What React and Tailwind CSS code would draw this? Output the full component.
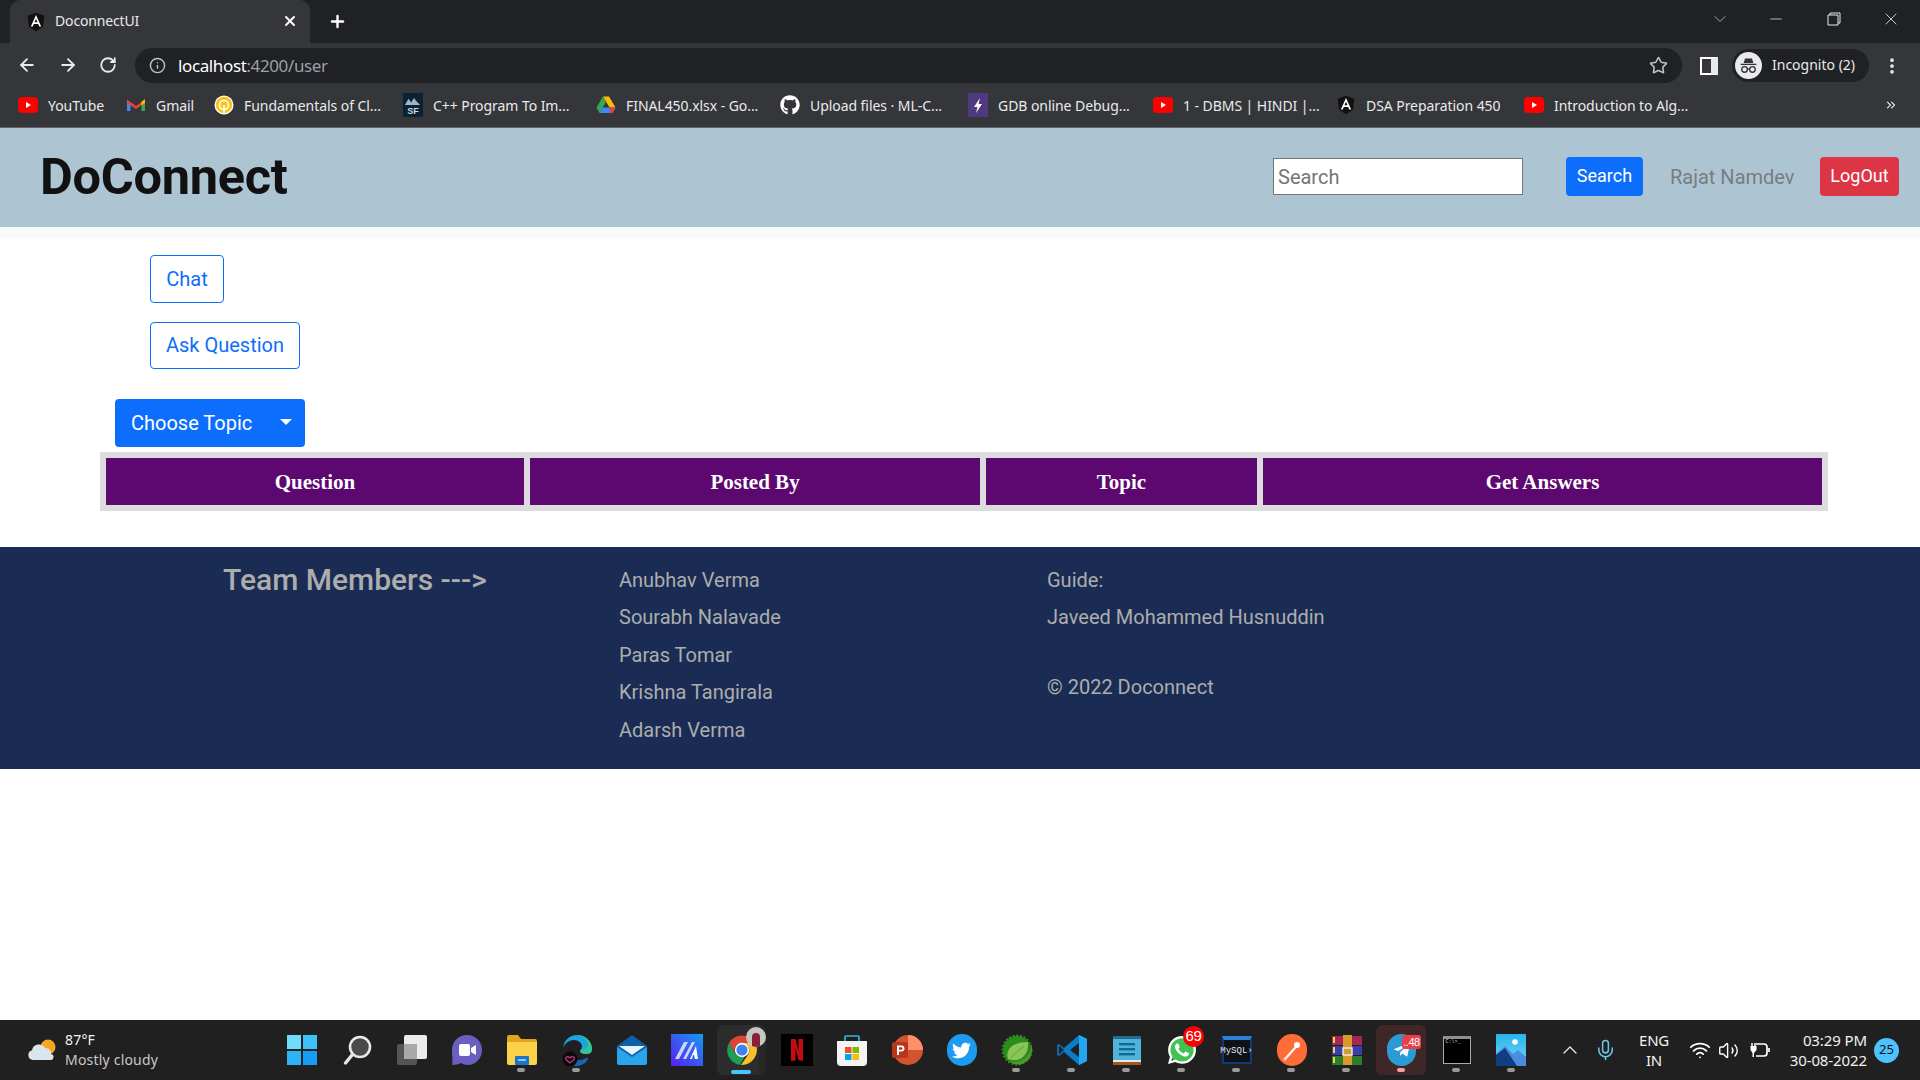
import React from 'react';
import { ArrowLeft, ArrowRight, RotateCw, Info, Star, X, Plus, ChevronDown, ChevronUp, Minus, EllipsisVertical, Mic, Wifi, Volume2, ChevronsRight } from 'lucide-react';
import { FaGithub, FaTwitter, FaWhatsapp, FaTelegramPlane } from 'react-icons/fa';

const Angular = () => (
  <svg viewBox="0 0 24 24" className="w-[20px] h-[20px]">
    <path d="M12 1 2 4.6l1.6 13.2L12 23l8.4-5.2L22 4.6z" fill="#111" />
    <path d="M12 3.5 5.8 17.4h2.3l1.25-3.1h5.3l1.25 3.1h2.3zM13.8 12.4h-3.6L12 8.1z" fill="#fff" />
  </svg>
);
const YouTube = () => (
  <svg viewBox="0 0 20 20" className="w-[20px] h-[20px]">
    <rect x="0" y="2" width="20" height="16" rx="4" fill="#f00" />
    <path d="M8 7v6l5-3z" fill="#fff" />
  </svg>
);
const Gmail = () => (
  <svg viewBox="0 0 20 20" className="w-[20px] h-[20px]">
    <path d="M1 5v11h3.5V8.5z" fill="#4285f4" />
    <path d="M19 5v11h-3.5V8.5z" fill="#34a853" />
    <path d="M1 4.5 10 11l9-6.5V8l-9 6-9-6z" fill="#ea4335" />
    <path d="M15.5 6.8 19 4.3V8l-3.5 2.4z" fill="#fbbc04" />
  </svg>
);
const Coin = () => (
  <svg viewBox="0 0 20 24" className="w-[20px] h-[24px]">
    <circle cx="10" cy="12" r="9.5" fill="#fff" />
    <circle cx="10" cy="12" r="8.2" fill="#f5c518" />
    <circle cx="10" cy="12" r="4.5" fill="none" stroke="#fff" strokeWidth="1.6" />
    <rect x="9.2" y="12" width="1.6" height="8" fill="#fff" />
  </svg>
);
const SfIcon = () => (
  <div className="w-[20px] h-[24px] bg-[#0b2235] flex flex-col items-center justify-end pb-[1px]">
    <svg viewBox="0 0 20 10" className="w-[18px] h-[9px]"><path d="M1 9 5 2l3 4 3-5 3 4 4 4z" fill="#9fb6c6" /></svg>
    <span className="font-['Liberation_Sans',sans-serif] font-bold text-[9px] leading-[10px] text-[#cfd8dc]">SF</span>
  </div>
);
const Drive = () => (
  <svg viewBox="0 0 20 20" className="w-[20px] h-[20px]">
    <path d="M7 1.5h6l6.5 11h-6z" fill="#fbbc04" />
    <path d="M7 1.5 .5 12.5l3 5.5L10 7z" fill="#34a853" />
    <path d="M3.5 18h13l3-5.5h-13z" fill="#4285f4" />
    <path d="M13.5 18h3l3-5.5h-5.5z" fill="#ea4335" />
  </svg>
);
const Gdb = () => (
  <svg viewBox="0 0 20 24" className="w-[20px] h-[24px]">
    <rect width="20" height="24" fill="#4f3a80" />
    <path d="M12 5 6 14h3.5L8 20l6-9h-3.5z" fill="#fff" />
  </svg>
);

const bookmarks = [
  { w: 'w-[108px]', icon: <YouTube />, label: 'YouTube' },
  { w: 'w-[88px]', icon: <Gmail />, label: 'Gmail' },
  { w: 'w-[189px]', icon: <Coin />, label: 'Fundamentals of Cl...' },
  { w: 'w-[193px]', icon: <SfIcon />, label: 'C++ Program To Im...' },
  { w: 'w-[184px]', icon: <Drive />, label: 'FINAL450.xlsx - Go...' },
  { w: 'w-[188px]', icon: <FaGithub className="w-[20px] h-[20px] text-white" />, label: 'Upload files · ML-C...' },
  { w: 'w-[185px]', icon: <Gdb />, label: 'GDB online Debug...' },
  { w: 'w-[183px]', icon: <YouTube />, label: '1 - DBMS | HINDI |...' },
  { w: 'w-[188px]', icon: <Angular />, label: 'DSA Preparation 450' },
  { w: 'w-[175px]', icon: <YouTube />, label: 'Introduction to Alg...' },
];

const Ico = ({ children, className = 'w-[32px] h-[32px]', box = '0 0 32 32' }) => (
  <svg viewBox={box} className={className}>{children}</svg>
);

const taskIcons = [
  { key: 'start', node: <Ico><rect x="1" y="1" width="14" height="14" fill="#6fdcfb" /><rect x="17" y="1" width="14" height="14" fill="#3dc2f7" /><rect x="1" y="17" width="14" height="14" fill="#2bb5f7" /><rect x="17" y="17" width="14" height="14" fill="#169ef5" /></Ico> },
  { key: 'search', node: <Ico><circle cx="19" cy="13" r="10" fill="#4a4a4a" stroke="#e8e8e8" strokeWidth="2.6" /><path d="M11.5 20.5 4.5 29" stroke="#e8e8e8" strokeWidth="3.4" strokeLinecap="round" /></Ico> },
  { key: 'task', node: <Ico><rect x="1" y="10" width="20" height="21" rx="2" fill="#555" /><rect x="8" y="1" width="23" height="24" rx="2" fill="#ececec" /><rect x="8" y="10" width="13" height="15" fill="#a9a9a9" /></Ico> },
  { key: 'chat', node: <Ico><path d="M16 1C7 1 1 8 1 16c0 5 1 11 0 15 4 0 7-1 9-2 2 1 4 2 7 2 8 0 14-7 14-15S25 1 16 1z" fill="#6a5fc1" /><rect x="8" y="10" width="11" height="12" rx="2" fill="#fff" /><path d="m20 14 5-3v10l-5-3z" fill="#fff" /></Ico> },
  { key: 'explorer', dot: true, node: <Ico><path d="M1 3a2 2 0 0 1 2-2h9l3 4h14a2 2 0 0 1 2 2v5H1z" fill="#e2a41a" /><path d="M1 8h30v21a2 2 0 0 1-2 2H3a2 2 0 0 1-2-2z" fill="#fbd249" /><rect x="9" y="22" width="14" height="9" rx="1" fill="#1a74c8" /><rect x="12" y="25" width="8" height="2" fill="#8cc8f5" /></Ico> },
  { key: 'edge', dot: true, node: <Ico><path d="M2 14C3 6 9 1 16 1c8 0 15 6 15 14 0 3-2 5-6 5-3 0-6-1-6-3 0-1 2-2 2-5 0-3-4-6-8-6C8 6 4 9 2 14z" fill="#1ea3e2" /><path d="M31 15c0-8-7-14-15-14 6 1 11 5 11 10 0 2-2 3-2 3l-6 3c0 2 3 3 6 3 4 0 6-2 6-5z" fill="#35c48d" /><path d="M10 31c5 2 11 1 15-3 3-3 2-5 0-4-5 3-10 3-13 0l-3 3z" fill="#1566b5" /><circle cx="9" cy="25" r="7.5" fill="#0b0b0f" /><path d="M9 29 5 25.5c-1.500-2 1.500-4 4-1.600 2.500-2.400 5.500-.4 4 1.600z" fill="none" stroke="#b83a72" strokeWidth="1.300" /></Ico> },
  { key: 'mail', node: <Ico><path d="M1 12 16 1l15 11v2L16 24 1 14z" fill="#0f5ea8" /><path d="M3 12h26l-13 9z" fill="#e5f3fb" /><path d="M1 13v16a2 2 0 0 0 2 2h26a2 2 0 0 0 2-2V13L16 23z" fill="#2aa4ea" /></Ico> },
  { key: 'mica', node: <Ico><defs><linearGradient id="mica" x1="0" y1="1" x2="1" y2="0"><stop offset="0" stopColor="#5a1cf5" /><stop offset="1" stopColor="#139cf0" /></linearGradient></defs><rect width="32" height="32" fill="url(#mica)" /><path d="M4 25 13 8h4L8 25zM12 25 21 8h3l-9 17z" fill="#cfd2fa" /><path d="M19 25l6-13 2 13h-3l-1-4h-1l-1 4z" fill="#fff" /></Ico> },
  { key: 'chrome', active: 'chrome', node: (
    <div className="relative w-[32px] h-[32px]">
      <Ico>
        <path d="M29.100 9A15 15 0 0 0 3 9l6.300 10.800A7.500 7.500 0 0 1 16 9z" fill="#de4437" />
        <path d="M3 9a15 15 0 0 0 11 22l6-11-1 1A7.500 7.500 0 0 1 9.300 19.800z" fill="#1f9d55" />
        <path d="M29.100 9H16a7.500 7.500 0 0 1 6.500 11L15 31A15 15 0 0 0 29.100 9z" fill="#fbc02d" />
        <circle cx="16" cy="16" r="7.200" fill="#fff" /><circle cx="16" cy="16" r="5.600" fill="#3f82ee" />
      </Ico>
      <div className="absolute -top-[7px] -right-[8px] w-[20px] h-[20px] rounded-full bg-[#c7c7c2] overflow-hidden flex justify-center items-end">
        <div className="w-[8px] h-[14px] bg-[#8c1f3c] rounded-t-full" />
      </div>
    </div>
  ) },
  { key: 'netflix', node: <Ico><rect width="32" height="32" fill="#000" /><path d="M10 5h4.500l3 12V5H22v22l-4.500-1-3-12v12.500L10 27z" fill="#c30b12" /></Ico> },
  { key: 'store', node: <Ico><path d="M9 8V3a1 1 0 0 1 1-1h12a1 1 0 0 1 1 1v5" fill="none" stroke="#2ab7ea" strokeWidth="1.700" /><path d="M1 7h30v21a4 4 0 0 1-4 4H5a4 4 0 0 1-4-4z" fill="#f4f4f4" /><rect x="9" y="13" width="6.500" height="6" fill="#f25022" /><rect x="16.500" y="13" width="6.500" height="6" fill="#7fba00" /><rect x="9" y="20" width="6.500" height="6" fill="#00a4ef" /><rect x="16.500" y="20" width="6.500" height="6" fill="#ffb900" /></Ico> },
  { key: 'ppt', node: <Ico><circle cx="17" cy="16" r="15" fill="#d35230" /><path d="M17 1a15 15 0 0 1 15 15H17z" fill="#ff8f6b" /><rect x="1" y="8" width="16" height="16" rx="2" fill="#b7361b" /><path d="M6 11.500h4.500a3 3 0 0 1 0 6H8v3.500H6zM8 13.200v2.600h2.200a1.300 1.300 0 0 0 0-2.600z" fill="#fff" /></Ico> },
  { key: 'twitter', node: <div className="w-[30px] h-[32px] rounded-full bg-[#1d9bf0] flex items-center justify-center"><FaTwitter className="w-[19px] h-[19px] text-white" /></div> },
  { key: 'spring', dot: true, node: <Ico><circle cx="16" cy="16" r="14" fill="#2e8b1f" strokeDasharray="2 1.600" stroke="#2e8b1f" strokeWidth="3" /><path d="M31 17a14 14 0 0 1-23 10C20 30 30 24 31 8z" fill="#4c9a2a" /><path d="M7 25c-3-8 3-17 20-17 1 9-4 18-13 18-2 0-5 0-7-1z" fill="#8bc557" /><path d="M10 24C14 19 18 16 23 12" stroke="#5da033" strokeWidth="1" fill="none" /></Ico> },
  { key: 'vscode', dot: true, node: <Ico><path d="M23 1 31 5v22l-8 4-15-13-5 4-2-1.500V11L3 10l5 4z" fill="#0a7dc9" /><path d="M23 1 31 5v22l-8 4z" fill="#25a6ee" /><path d="M23 9v14l-9-7z" fill="#212121" /><path d="M3 10 1 11v10l2 1 5-6z" fill="#0e64a8" /><path d="M8 16 3 12v8z" fill="#212121" /></Ico> },
  { key: 'notes', dot: true, node: <Ico><rect x="2" y="3" width="28" height="26" fill="#4fb3da" /><rect x="2" y="27" width="28" height="4" fill="#9c5a1f" /><rect x="2" y="26" width="28" height="2" fill="#e8e8e8" /><rect x="2" y="2" width="28" height="3" fill="#1f6f94" /><rect x="8" y="9" width="16" height="2.400" fill="#126a91" /><rect x="8" y="14" width="16" height="2.400" fill="#126a91" /><rect x="8" y="19" width="16" height="2.400" fill="#126a91" /></Ico> },
  { key: 'whatsapp', dot: true, badge: '69', node: (
    <div className="relative w-[32px] h-[32px]">
      <div className="absolute inset-[3px] rounded-full bg-[#40c351]" />
      <FaWhatsapp className="absolute inset-0 w-[32px] h-[32px] text-white" />
    </div>
  ) },
  { key: 'mysql', dot: true, node: <div className="w-[30px] h-[28px] bg-[#10121a] border-2 border-[#123a78] border-t-[4px] border-t-[#2e7fd6] flex items-center justify-center"><span className="font-['Liberation_Mono',monospace] text-[9px] leading-none text-[#e5e5e5]">MySQL›</span></div> },
  { key: 'postman', dot: true, node: <div className="w-[30px] h-[32px] rounded-full bg-[#ff6c37] flex items-center justify-center"><svg viewBox="0 0 30 32" className="w-[30px] h-[32px]"><path d="M9 24l8-9M17 15l4-4" stroke="#fff" strokeWidth="2" strokeLinecap="round" /><circle cx="20" cy="11" r="3" fill="#fff" /><path d="M9 24l-2 2" stroke="#ffd6c7" strokeWidth="3" /></svg></div> },
  { key: 'winrar', dot: true, node: <Ico><rect x="1" y="2" width="30" height="9" fill="#a6274f" /><rect x="1" y="12" width="30" height="9" fill="#3a3ea8" /><rect x="1" y="22" width="30" height="9" fill="#2d7d2d" /><rect x="12" y="1" width="9" height="30" fill="#d69a2d" /><rect x="12" y="14" width="9" height="7" fill="none" stroke="#eee" strokeWidth="1.400" /><rect x="2" y="3" width="2" height="6" fill="#f3d14b" /><rect x="2" y="13" width="2" height="6" fill="#f3d14b" /><rect x="2" y="23" width="2" height="6" fill="#f3d14b" /></Ico> },
  { key: 'telegram', active: 'telegram', badge2: '..48', node: <div className="w-[29px] h-[32px] rounded-full bg-[#2b9bd6] flex items-center justify-center"><FaTelegramPlane className="w-[18px] h-[18px] text-white" /></div> },
  { key: 'terminal', dot: true, node: <div className="w-[28px] h-[28px] bg-black border border-[#aaa] border-t-[3px] border-t-[#8f8f8f] pl-[2px]"><span className="block font-['Liberation_Mono',monospace] text-[5px] leading-[7px] text-[#ddd]">C:\&gt;_</span></div> },
  { key: 'photos', dot: true, node: <Ico><defs><linearGradient id="sky" x1="0" y1="0" x2="0" y2="1"><stop offset="0" stopColor="#28b5ec" /><stop offset="1" stopColor="#7ad4f6" /></linearGradient></defs><rect width="30" height="32" fill="url(#sky)" /><circle cx="19" cy="8" r="2.800" fill="#fff" /><path d="M0 32V20L9 12l8 8 5-4 8 7v9z" fill="#4c8ce0" /><path d="M0 32V21l9-7 12 18z" fill="#123d80" /></Ico> },
];

function ChromeBar() {
  return (
    <div className="shrink-0 font-['Noto_Sans',sans-serif] text-white">
      <div className="h-[43px] bg-[#202124] flex items-end relative">
        <div className="ml-[10px] w-[300px] h-[43px] bg-[#35363a] rounded-t-[10px] flex items-center pl-[16px] pr-[12px]">
          <Angular />
          <span className="ml-[9px] -translate-y-[1px] text-[14px] tracking-[-0.15px] text-[#e8eaed] flex-1">DoconnectUI</span>
          <X className="w-[16px] h-[16px] -translate-y-[1px] text-white" strokeWidth={3} />
        </div>
        <Plus className="w-[19px] h-[19px] ml-[18px] mb-[12px] text-white" strokeWidth={3} />
        <div className="flex-1" />
        <div className="flex items-center h-[43px] pb-[6px] text-[#e8eaed]">
          <ChevronDown className="w-[20px] h-[20px] mr-[37px] text-[#bdc1c6]" strokeWidth={1} />
          <Minus className="w-[18px] h-[18px] mr-[42px]" strokeWidth={1} />
          <svg viewBox="0 0 14 14" className="w-[14px] h-[14px] mr-[40px]"><path d="M3 3V1h10v10h-2M1 3h10v10H1z" fill="none" stroke="#e8eaed" strokeWidth="1" /></svg>
          <X className="w-[20px] h-[20px] mr-[19px]" strokeWidth={1} />
        </div>
      </div>
      <div className="h-[40px] bg-[#35363a] flex items-end">
        <div className="w-[135px] h-[35px] flex items-center pl-[17px] pb-[2px] text-[#e8eaed] gap-[21px]">
          <ArrowLeft className="w-[20px] h-[20px]" strokeWidth={2.2} />
          <ArrowRight className="w-[20px] h-[20px]" strokeWidth={2.2} />
          <RotateCw className="w-[18px] h-[18px]" strokeWidth={2.4} />
        </div>
        <div className="w-[1547px] h-[35px] bg-[#202124] rounded-full flex items-center pl-[14px] pr-[14px]">
          <Info className="w-[17px] h-[17px] text-[#bdc1c6]" strokeWidth={2} />
          <span className="ml-[12px] text-[17px] tracking-[-0.38px] text-white flex-1">localhost<span className="text-[#9aa0a6]">:4200/user</span></span>
          <Star className="w-[19px] h-[19px] text-[#bdc1c6]" strokeWidth={2} />
        </div>
        <div className="flex-1 h-[35px] flex items-center">
          <div className="ml-[18px] w-[18px] h-[18px] border-[2.5px] border-white border-r-[7px] border-r-[#e8eaed] bg-[#35363a]" />
          <div className="ml-[14px] w-[137px] h-[33px] rounded-full bg-[#202124] flex items-center pl-[3px]">
            <div className="w-[27px] h-[27px] rounded-full bg-[#e8eaed] flex items-center justify-center">
              <svg viewBox="0 0 24 24" className="w-[21px] h-[21px]"><path d="M8 4h8l1.500 5h-11zM3 10h18v1.500H3z" fill="#333" /><circle cx="7.500" cy="16.500" r="3.200" fill="none" stroke="#333" strokeWidth="1.500" /><circle cx="16.500" cy="16.500" r="3.200" fill="none" stroke="#333" strokeWidth="1.500" /><path d="M10.500 16h3" stroke="#333" strokeWidth="1.500" /></svg>
            </div>
            <span className="ml-[10px] -translate-y-[1px] text-[14px] tracking-[0px] text-[#e8eaed] whitespace-nowrap">Incognito (2)</span>
          </div>
          <EllipsisVertical className="w-[20px] h-[20px] ml-[13px] text-[#e8eaed]" strokeWidth={2.5} />
        </div>
      </div>
      <div className="h-[45px] bg-[#35363a] flex items-center pl-[18px] border-b border-[#5f6368]">
        {bookmarks.map((b, i) => (
          <div key={i} className={`${b.w} flex items-center gap-[10px] shrink-0`}>
            <span className="w-[20px] flex justify-center shrink-0">{b.icon}</span>
            <span className="text-[14px] tracking-[-0.06px] text-[#e8eaed] whitespace-nowrap">{b.label}</span>
          </div>
        ))}
        <div className="flex-1" />
        <ChevronsRight className="w-[14px] h-[14px] mr-[22px] text-[#e8eaed]" strokeWidth={2} />
      </div>
    </div>
  );
}

function Page() {
  return (
    <div className="flex-1 bg-white font-['Roboto',sans-serif]">
      <header className="h-[99px] bg-[#adc5d2] flex items-center pl-[40px]">
        <h1 className="text-[50.5px] font-bold tracking-[-0.3px] text-[#111] leading-none flex-1">DoConnect</h1>
        <input readOnly placeholder="Search" className="w-[250px] h-[37px] -translate-y-[1px] mr-[-1px] bg-white border border-[#767676] pl-[4px] text-[20px] text-[#757575] placeholder:text-[#757575] outline-none" />
        <button className="ml-[44px] w-[77px] h-[39px] -translate-y-[1px] rounded-[4px] bg-[#0d6efd] text-white text-[18px] pb-[2px]">Search</button>
        <span className="ml-[27px] w-[150px] -translate-y-[1px] text-[20px] text-[#777d84]">Rajat Namdev</span>
        <button className="w-[79px] h-[39px] -translate-y-[1px] rounded-[4px] bg-[#dc3545] text-white text-[18px] mr-[21px] pb-[2px]">LogOut</button>
      </header>
      <div className="h-[11px] bg-[#f8f9fa]" />
      <div className="pl-[150px] pt-[17px] flex flex-col items-start gap-[19px]">
        <button className="w-[74px] h-[48px] rounded-[4px] border border-[#0d6efd] text-[#0d6efd] text-[20px]">Chat</button>
        <button className="w-[150px] h-[47px] rounded-[4px] border border-[#0d6efd] text-[#0d6efd] text-[20px] pb-[1px]">Ask Question</button>
      </div>
      <button className="ml-[115px] mt-[30px] w-[190px] h-[48px] rounded-[4px] bg-[#0d6efd] text-white text-[20px] flex items-center pl-[16px]">
        Choose Topic
        <span className="ml-[28px] w-0 h-0 border-x-[6px] border-x-transparent border-t-[6px] border-t-white -translate-y-[1px]" />
      </button>
      <div className="ml-[100px] mr-[92px] mt-[5px] bg-[#dcdcdc]">
        <table className="w-full table-fixed border-separate [border-spacing:6px]">
          <thead>
            <tr className="h-[47px] text-white font-['Liberation_Serif',serif]">
              <th className="w-[418px] bg-[#5c0870] text-[21px] font-bold pt-[2px]">Question</th>
              <th className="w-[450px] bg-[#5c0870] text-[21px] font-bold pt-[2px]">Posted By</th>
              <th className="w-[271px] bg-[#5c0870] text-[21px] font-bold pt-[2px]">Topic</th>
              <th className="bg-[#5c0870] text-[21px] font-bold pt-[2px]">Get Answers</th>
            </tr>
          </thead>
        </table>
      </div>
      <footer className="mt-[36px] h-[222px] bg-[#1a2c54] flex text-[#adadad] text-[20px]">
        <div className="ml-[223px] w-[396px] text-[30px] font-medium pt-[15px] leading-[36px]">Team Members ---&gt;</div>
        <div className="w-[428px] pt-[17.5px] flex flex-col gap-[7.5px] leading-[30px]">
          <span>Anubhav Verma</span>
          <span>Sourabh Nalavade</span>
          <span>Paras Tomar</span>
          <span>Krishna Tangirala</span>
          <span>Adarsh Verma</span>
        </div>
        <div className="pt-[17.5px] flex flex-col leading-[30px]">
          <span>Guide:</span>
          <span className="mt-[7.5px]">Javeed Mohammed Husnuddin</span>
          <span className="mt-[40px]">© 2022 Doconnect</span>
        </div>
      </footer>
    </div>
  );
}

function Taskbar() {
  return (
    <div className="shrink-0 h-[60px] bg-[#202020] flex items-center text-white font-['Noto_Sans',sans-serif]">
      <div className="w-[274px] flex items-center pl-[27px]">
        <svg viewBox="0 0 30 26" className="w-[30px] h-[26px]">
          <circle cx="21" cy="10" r="7.500" fill="#f6a623" />
          <path d="M6 23a5 5 0 0 1-1-9.800A7 7 0 0 1 18 11a5.500 5.500 0 0 1 6 6 3 3 0 0 1-1 6z" fill="#dbe5f0" />
        </svg>
        <div className="ml-[8px] flex flex-col leading-[20px] text-[14px] tracking-[0.2px]">
          <span className="text-[#f2f2f2]">87°F</span>
          <span className="text-[#c9c9c9]">Mostly cloudy</span>
        </div>
      </div>
      <div className="flex">
        {taskIcons.map((t) => (
          <div key={t.key} className="relative w-[55px] h-[60px] flex items-center justify-center">
            {t.active === 'chrome' && <div className="absolute left-[3px] top-[5px] w-[49px] h-[50px] rounded-[6px] bg-[#2c2c2c] border-r-[7px] border-r-[#272727]" />}
            {t.active === 'telegram' && <div className="absolute left-[2px] top-[5px] w-[50px] h-[50px] rounded-[6px] bg-[#3f2728]" />}
            <div className="relative">{t.node}</div>
            {t.dot && <div className="absolute bottom-[8px] left-[23px] w-[8px] h-[4px] rounded-full bg-[#9a9a9a]" />}
            {t.active === 'chrome' && <div className="absolute bottom-[6px] left-[17px] w-[20px] h-[4px] rounded-full bg-[#4cc2ff]" />}
            {t.active === 'telegram' && <div className="absolute bottom-[8px] left-[23px] w-[8px] h-[4px] rounded-full bg-[#f4a0a8]" />}
            {t.badge && <div className="absolute top-[6px] right-[5px] w-[21px] h-[21px] rounded-full bg-[#f00] flex items-center justify-center text-[15px] tracking-[-0.3px] font-['Liberation_Sans',sans-serif]">{t.badge}</div>}
            {t.badge2 && <div className="absolute top-[15px] right-[8px] w-[19px] h-[14px] rounded-[3px] bg-[#e8404a] flex items-center justify-center text-[11px] tracking-[-0.5px] font-['Liberation_Sans',sans-serif]">{t.badge2}</div>}
          </div>
        ))}
      </div>
      <div className="flex items-center flex-1">
        <ChevronUp className="w-[24px] h-[24px] ml-[19px] text-[#e8e8e8]" strokeWidth={1.3} />
        <Mic className="w-[23px] h-[26px] ml-[12px] text-[#6cc6e6]" strokeWidth={1.6} />
        <div className="ml-[22px] flex flex-col items-center leading-[20px] text-[15px] tracking-[-0.2px] text-[#f2f2f2]">
          <span>ENG</span><span>IN</span>
        </div>
        <Wifi className="w-[22px] h-[22px] ml-[20px] text-white" strokeWidth={2} />
        <Volume2 className="w-[21px] h-[21px] ml-[7px] text-white" strokeWidth={1.6} />
        <svg viewBox="0 0 22 16" className="w-[22px] h-[16px] ml-[10px]"><path d="M7 2h8a3 3 0 0 1 3 3v6a3 3 0 0 1-3 3H7" fill="none" stroke="#fff" strokeWidth="1.700" /><path d="M20 6v4" stroke="#fff" strokeWidth="1.700" /><path d="M3 1v3M6 1v3" stroke="#fff" strokeWidth="1.500" /><path d="M1.500 4h6v4L5 11v4H3.500v-4L1.500 8z" fill="#fff" /></svg>
        <div className="ml-auto flex flex-col items-end leading-[20px] text-[15px] tracking-[-0.1px] text-[#f2f2f2]">
          <span>03:29 PM</span><span>30-08-2022</span>
        </div>
        <div className="ml-[7px] mr-[21px] w-[25px] h-[25px] rounded-full bg-[#4cc2ff] flex items-center justify-center text-[13px] text-[#111]">25</div>
      </div>
    </div>
  );
}

export default function App() {
  return (
    <div className="w-[1920px] h-[1080px] flex flex-col overflow-hidden">
      <ChromeBar />
      <Page />
      <Taskbar />
    </div>
  );
}
